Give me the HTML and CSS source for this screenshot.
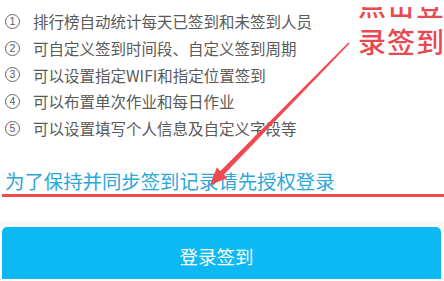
FILE: index.html
```html
<!DOCTYPE html>
<html lang="zh-CN">
<head>
<meta charset="utf-8">
<title>登录签到</title>
<link rel="stylesheet" href="styles.css">
</head>
<body>
<div class="page">
  <ol class="features">
    <li><span class="num">1</span><span class="txt">排行榜自动统计每天已签到和未签到人员</span></li>
    <li><span class="num">2</span><span class="txt">可自定义签到时间段、自定义签到周期</span></li>
    <li><span class="num">3</span><span class="txt">可以设置指定WIFI和指定位置签到</span></li>
    <li><span class="num">4</span><span class="txt">可以布置单次作业和每日作业</span></li>
    <li><span class="num">5</span><span class="txt">可以设置填写个人信息及自定义字段等</span></li>
  </ol>
  <p class="notice">为了保持并同步签到记录请先授权登录</p>
  <div class="divider"></div>
  <button class="login">登录签到</button>

  <div class="callout"><div class="callout-text">点击登<br>录签到</div></div>
  <svg class="arrow" width="444" height="281" viewBox="0 0 444 281">
    <polygon points="210,185 216.8,167.4 220.4,170.9 348.4,42.4 349.6,43.6 224,174.4 227.6,177.9" fill="#ee4a4f"/>
  </svg>
</div>
</body>
</html>
```
FILE: styles.css
```css
html, body {
  margin: 0;
  padding: 0;
  background: #ffffff;
  overflow: hidden;
}
.page {
  position: relative;
  width: 444px;
  height: 281px;
  overflow: hidden;
  font-family: "Noto Sans CJK SC", "Noto Sans", sans-serif;
}
.features {
  list-style: none;
  margin: 0;
  padding: 8px 0 0 5px;
  color: #5a5a5a;
  font-size: 15.5px;
}
.features li {
  display: flex;
  align-items: center;
  height: 26.7px;
}
.num {
  box-sizing: border-box;
  width: 15px;
  height: 15px;
  margin-right: 13px;
  flex: none;
  display: flex;
  align-items: center;
  justify-content: center;
  border: 1px solid #666666;
  border-radius: 50%;
  font-family: "Liberation Sans", "Noto Sans", sans-serif;
  font-size: 10.5px;
  line-height: 1;
  color: #5a5a5a;
}
.txt {
  white-space: nowrap;
}
.notice {
  margin: 28px 0 0 2px;
  padding: 0 0 1px 3px;
  height: 24px;
  line-height: 24px;
  font-size: 19.4px;
  color: #2ba7da;
  border-bottom: 3px solid #f04a4e;
  white-space: nowrap;
}
.divider {
  margin-top: 24px;
  height: 6px;
  background: #f8f9f8;
}
.login {
  display: block;
  box-sizing: border-box;
  width: 439px;
  height: 52px;
  margin: 0 0 0 2px;
  padding: 0 10px 0 0;
  border: 0;
  border-radius: 5px 5px 0 0;
  background: #0cb9f2;
  color: #ffffff;
  font-family: "Noto Sans CJK SC", "Noto Sans", sans-serif;
  font-size: 18.5px;
  line-height: 58px;
  text-align: center;
  overflow: hidden;
}
.callout {
  position: absolute;
  left: 358px;
  top: 7px;
  width: 100px;
  height: 56px;
  overflow: hidden;
}
.callout-text {
  margin-top: -21px;
  font-size: 28px;
  line-height: 37px;
  letter-spacing: 1px;
  font-weight: 500;
  color: #e84a50;
  white-space: nowrap;
}
.arrow {
  position: absolute;
  left: 0;
  top: 0;
  pointer-events: none;
}
```
